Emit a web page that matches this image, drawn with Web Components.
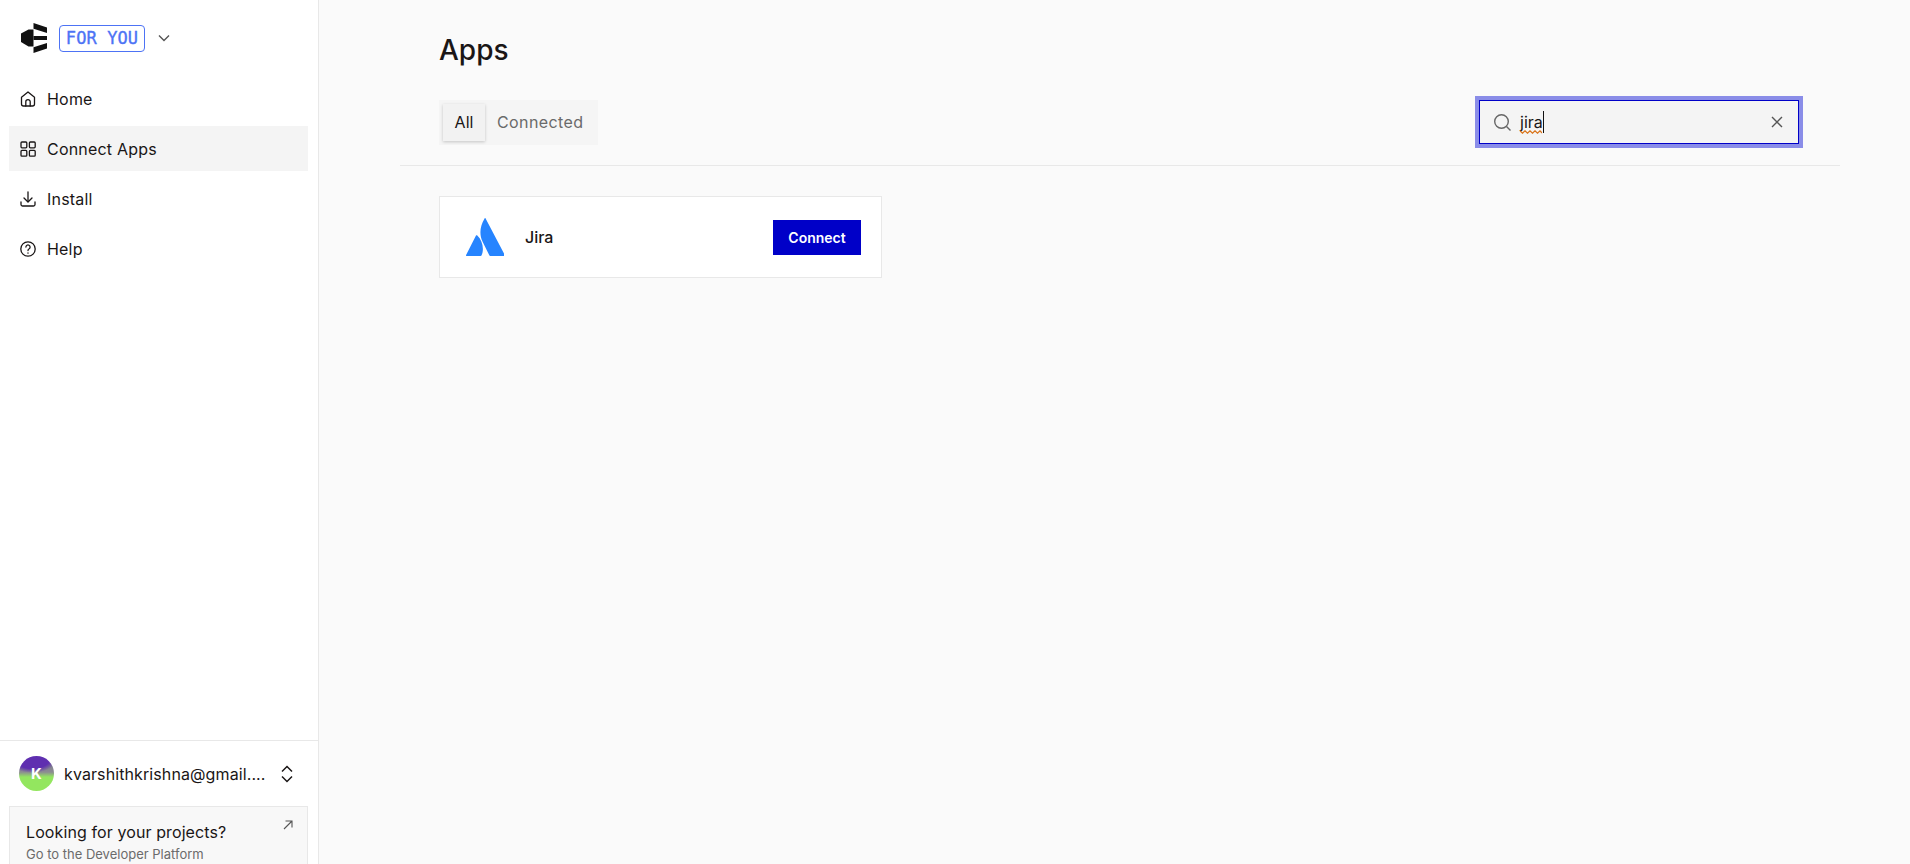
<!DOCTYPE html>
<html>
<head>
<meta charset="utf-8">
<style>
	html, body { margin: 0; height: 100%; overflow: hidden; background: #fafafa; }
	body { font-family: "Inter", "Liberation Sans", sans-serif; color: #1a1616; }
</style>
</head>
<body>
<app-shell>
	<side-bar slot="side"></side-bar>
	<apps-page></apps-page>
</app-shell>
<script>
const ICONS = {
	home: `<path d="M3.500 8.200 10 3l6.500 5.200V15a2 2 0 0 1-2 2h-9a2 2 0 0 1-2-2z"/><path d="M7.800 17v-4.200a2.200 2.200 0 0 1 4.400 0V17"/>`,
	grid: `<rect x="3" y="3" width="5.800" height="5.800" rx="1"/><rect x="11.400" y="3" width="5.800" height="5.800" rx="1"/><rect x="3" y="11.400" width="5.800" height="5.800" rx="1"/><rect x="11.400" y="11.400" width="5.800" height="5.800" rx="1"/>`,
	install: `<path d="M10 3v9.500"/><path d="M6 9l4 4 4-4"/><path d="M3 13v2.500A1.500 1.500 0 0 0 4.500 17h11a1.500 1.500 0 0 0 1.500-1.500V13"/>`,
	help: `<circle cx="10" cy="10" r="7.200"/><path d="M7.900 8a2.100 2.100 0 1 1 3.300 1.800c-.8.500-1.200 1-1.200 1.800"/><path d="M10 14v.2"/>`,
};

class AppShell extends HTMLElement {
	constructor() {
		super();
		this.attachShadow({ mode: "open" });
		this.shadowRoot.innerHTML = `<style>
			:host { display: flex; height: 864px; overflow: hidden; }
		</style><slot name="side"></slot><slot></slot>`;
	}
}

class NavItem extends HTMLElement {
	constructor() {
		super();
		this.attachShadow({ mode: "open" });
		var icon = ICONS[this.getAttribute("icon")];
		this.shadowRoot.innerHTML = `<style>
			:host {
				display: flex;
				align-items: center;
				gap: 9px;
				height: 45px;
				padding-left: 10px;
				font-size: 16px;
				letter-spacing: 0.2px;
				color: #1a1616;
			}
			:host([active]) { background: #f4f4f4; }
			svg { width: 20px; height: 20px; fill: none; stroke: #1a1616; stroke-width: 1.3; stroke-linecap: round; stroke-linejoin: round; flex: none; margin-left: -1px; }
		</style><svg viewBox="0 0 20 20">${icon}</svg><slot></slot>`;
	}
}

class SideBar extends HTMLElement {
	constructor() {
		super();
		this.attachShadow({ mode: "open" });
		this.shadowRoot.innerHTML = `<style>
			:host {
				display: flex;
				flex-direction: column;
				flex: none;
				box-sizing: border-box;
				width: 319px;
				height: 864px;
				background: #fff;
				border-right: 1px solid #e8e8e8;
				overflow: hidden;
			}
			.top { flex: 0 0 740px; box-sizing: border-box; padding: 0 10px 0 9px; }
			.brand { display: flex; align-items: center; height: 76px; padding-left: 12px; box-sizing: border-box; }
			.logo { width: 26px; height: 30px; flex: none; }
			.tag {
				margin-left: 12px;
				box-sizing: border-box;
				width: 86px;
				height: 27px;
				display: flex;
				align-items: center;
				justify-content: center;
				border: 1px solid #4d73f5;
				border-radius: 4px;
				color: #4d73f5;
				font: 500 17px "DejaVu Sans Mono", "Liberation Mono", monospace;
				-webkit-text-stroke: 0.35px #4d73f5;
				letter-spacing: 0.1px;
			}
			.chev { margin-left: 12px; width: 14px; height: 14px; fill: none; stroke: #555; stroke-width: 1.4; }
			nav { display: flex; flex-direction: column; gap: 5px; }
			.foot { border-top: 1px solid #e8e8e8; flex: none; padding: 0 10px 0 9px; }
			.user { display: flex; align-items: center; height: 65px; padding-left: 10px; box-sizing: border-box; }
			.avatar {
				width: 35px; height: 35px; border-radius: 50%; flex: none;
				background:
					radial-gradient(ellipse 72% 42% at 38% 6%, #5f2fb0 72%, rgba(95,47,176,0) 100%),
					linear-gradient(180deg, #83838f 30%, #8c8c92 46%, #93e65f 60%);
				color: #fff; font-size: 15px; font-weight: 700;
				display: flex; align-items: center; justify-content: center;
			}
			.mail { margin-left: 10px; width: 202px; font-size: 16px; letter-spacing: 0.1px; white-space: nowrap; }
			.updown { margin-left: 13px; width: 16px; height: 20px; fill: none; stroke: #1a1616; stroke-width: 1.5; flex: none; }
			.card {
				position: relative;
				box-sizing: border-box;
				height: 92px;
				background: #f8f8f8;
				border: 1px solid #e8e8e8;
				padding: 15px 16px;
			}
			.card b { display: block; font-weight: 400; font-size: 16px; line-height: 20px; letter-spacing: 0.1px; color: #1a1616; }
			.card span { display: block; font-size: 13px; line-height: 18px; margin-top: 3px; color: #6b6b6b; }
			.arrow { position: absolute; top: 12px; right: 13px; width: 12px; height: 12px; fill: none; stroke: #555; stroke-width: 1.1; }
		</style>
		<div class="top">
			<div class="brand">
				<svg class="logo" viewBox="0 0 26 30">
					<path fill="#111" d="M12.500 0 26 4.500V10L12.500 5.800z"/>
					<path fill="#111" d="M0 10.500 7.500 6.500H12.500V23.500H7.500L0 19z"/>
					<path fill="#111" d="M12.500 13H26v4H12.500z"/>
					<path fill="#111" d="M12.500 30 26 25.500V20L12.500 24.200z"/>
				</svg>
				<span class="tag">FOR YOU</span>
				<svg class="chev" viewBox="0 0 14 14"><path d="M2 4.500 7 9.500 12 4.500"/></svg>
			</div>
			<nav>
				<nav-item icon="home">Home</nav-item>
				<nav-item icon="grid" active>Connect Apps</nav-item>
				<nav-item icon="install">Install</nav-item>
				<nav-item icon="help">Help</nav-item>
			</nav>
		</div>
		<div class="foot">
			<div class="user">
				<div class="avatar">K</div>
				<div class="mail">kvarshithkrishna@gmail....</div>
				<svg class="updown" viewBox="0 0 16 20"><path d="M3 7.500 8 2.500 13 7.500M3 12.500 8 17.500 13 12.500"/></svg>
			</div>
			<div class="card">
				<b>Looking for your projects?</b>
				<span>Go to the Developer Platform</span>
				<svg class="arrow" viewBox="0 0 12 12"><path d="M2 10 10 2M3.500 2H10V8.500"/></svg>
			</div>
		</div>`;
	}
}

class TabSwitch extends HTMLElement {
	constructor() {
		super();
		this.attachShadow({ mode: "open" });
		this.shadowRoot.innerHTML = `<style>
			:host {
				display: flex;
				align-items: center;
				box-sizing: border-box;
				width: 159px;
				height: 45px;
				padding: 0 4px;
				background: #f5f5f5;
				font-size: 16px;
			}
			.on {
				box-sizing: border-box;
				width: 42px; height: 37px;
				display: flex; align-items: center; justify-content: center;
				background: #f2f2f2;
				box-shadow: 0 1px 3px rgba(0,0,0,.2);
				color: #1a1616;
			}
			.off { margin-left: 12px; color: #6a6a6a; letter-spacing: 0.4px; }
		</style><div class="on">All</div><div class="off">Connected</div>`;
	}
}

class SearchBox extends HTMLElement {
	constructor() {
		super();
		this.attachShadow({ mode: "open" });
		this.shadowRoot.innerHTML = `<style>
			:host {
				display: flex;
				align-items: center;
				box-sizing: border-box;
				width: 320px;
				height: 44px;
				margin: 4px;
				padding: 0 14px 0 13px;
				background: #f4f4f4;
				border: 1px solid #0000c8;
				box-shadow: 0 0 0 4px #8a8de8;
				font-size: 16px;
				color: #1a1616;
			}
			.glass { width: 19px; height: 19px; fill: none; stroke: #666; stroke-width: 1.4; flex: none; }
			.text {
				margin-left: 8px;
				position: relative;
				border-right: 1px solid #111;
				line-height: 22px;
			}
			.wave { position: absolute; left: 0; bottom: -1px; width: 22px; height: 4px; fill: none; stroke: #d9741a; stroke-width: 1.2; }
			.x { margin-left: auto; width: 14px; height: 14px; fill: none; stroke: #555; stroke-width: 1.4; }
		</style>
		<svg class="glass" viewBox="0 0 19 19"><circle cx="8.500" cy="8.500" r="6.800"/><path d="M13.500 13.500 17.500 17.500"/></svg>
		<span class="text">jira<svg class="wave" viewBox="0 0 22 4"><path d="M0 .8 2.500 3.200 5 .8 7.500 3.200 10 .8 12.500 3.200 15 .8 17.500 3.200 20 .8 22 3"/></svg></span>
		<svg class="x" viewBox="0 0 14 14"><path d="M2 2 12 12M12 2 2 12"/></svg>`;
	}
}

class AppCard extends HTMLElement {
	constructor() {
		super();
		this.attachShadow({ mode: "open" });
		this.shadowRoot.innerHTML = `<style>
			:host {
				display: flex;
				align-items: center;
				box-sizing: border-box;
				width: 443px;
				height: 82px;
				padding: 0 20px 0 26px;
				background: #fff;
				border: 1px solid #e8e8e8;
			}
			svg { width: 38px; height: 38px; flex: none; }
			.name { margin-left: 21px; font-size: 16px; font-weight: 500; }
			button {
				margin-left: auto;
				width: 88px; height: 35px;
				border: 0;
				background: #0000c8;
				color: #fff;
				font: 600 14px "Inter", "Liberation Sans", sans-serif;
			}
		</style>
		<svg viewBox="0 0 38 38">
			<path fill="#2684ff" d="M11.300 17.500c-.4-.5-1-.5-1.300.1L.1 37c-.3.500.1 1 .6 1h13.900c.4 0 .7-.2.900-.5 2.900-6 1.100-15-4.200-20z"/>
			<path fill="#2684ff" d="M18.600.4c-5 8-5.300 16.600-2 23.300l6.700 13.600c.2.400.5.700 1 .700h13.900c.5 0 .9-.5.600-1L19.600.4c-.2-.5-.8-.5-1 0z"/>
		</svg>
		<span class="name"><slot></slot></span>
		<button>Connect</button>`;
	}
}

class AppsPage extends HTMLElement {
	constructor() {
		super();
		this.attachShadow({ mode: "open" });
		this.shadowRoot.innerHTML = `<style>
			:host { display: block; flex: 1; min-width: 0; box-sizing: border-box; padding: 0 70px 0 81px; }
			h1 { margin: 0; padding-left: 39px; font-size: 28px; font-weight: 500; line-height: 34px; padding-top: 33px; color: #1a1616; }
			.bar {
				display: flex;
				align-items: center;
				justify-content: space-between;
				height: 99px;
				box-sizing: border-box;
				padding: 29px 37px 17px 39px;
				border-bottom: 1px solid #e8e8e8;
			}
			.list { padding: 30px 0 0 39px; }
		</style>
		<h1>Apps</h1>
		<div class="bar"><tab-switch></tab-switch><search-box></search-box></div>
		<div class="list"><app-card>Jira</app-card></div>`;
	}
}

customElements.define("app-shell", AppShell);
customElements.define("nav-item", NavItem);
customElements.define("side-bar", SideBar);
customElements.define("tab-switch", TabSwitch);
customElements.define("search-box", SearchBox);
customElements.define("app-card", AppCard);
customElements.define("apps-page", AppsPage);
</script>
</body>
</html>
